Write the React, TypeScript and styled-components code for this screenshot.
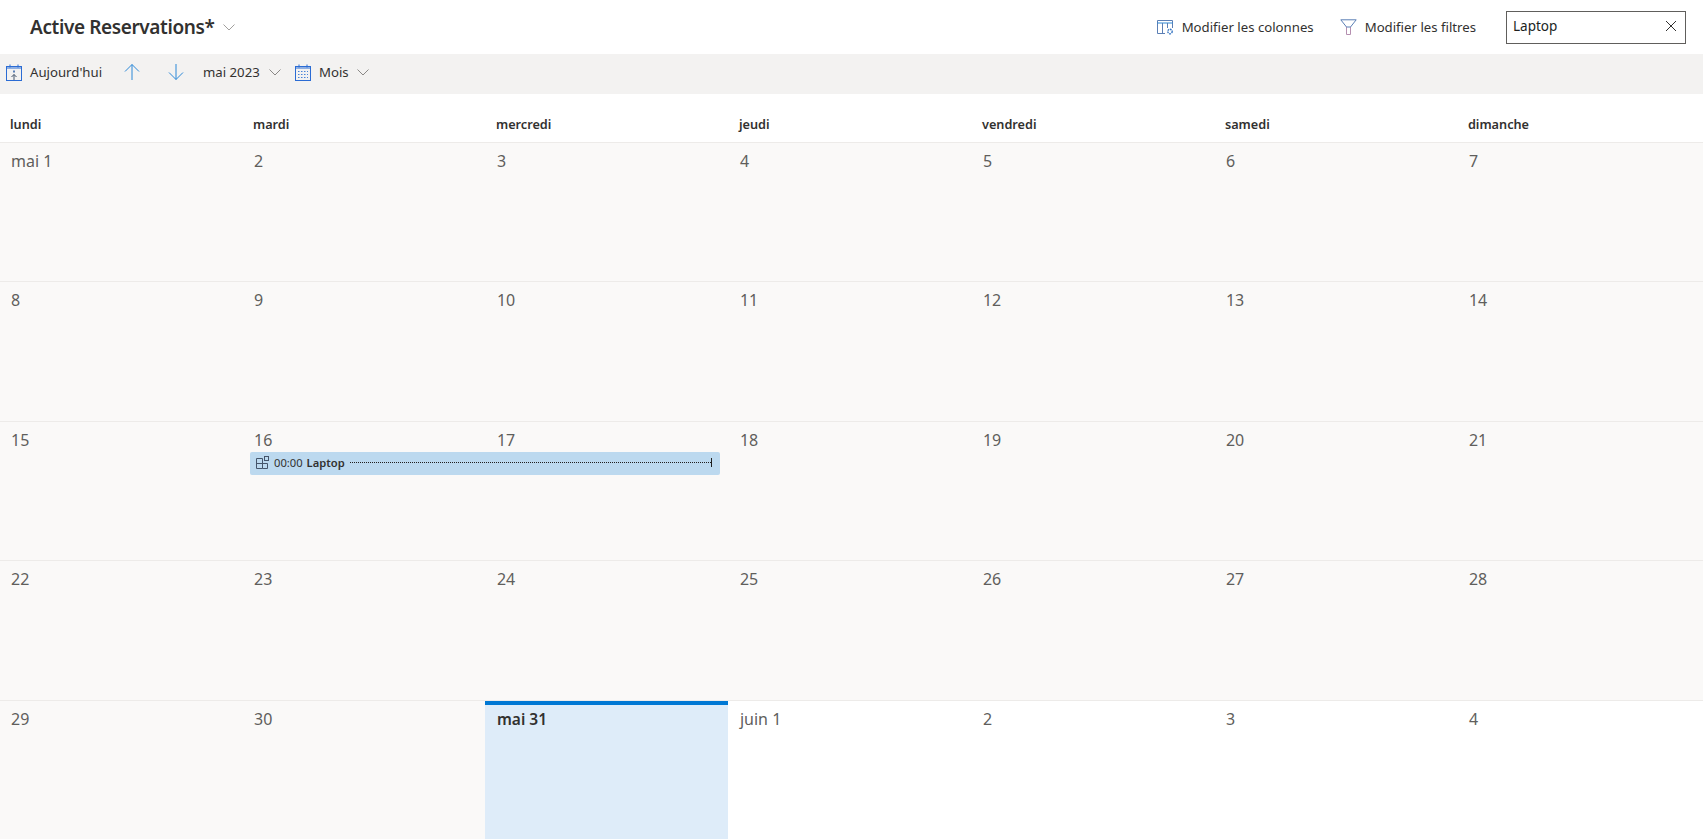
import styled, { createGlobalStyle } from "styled-components";

const GlobalStyle = createGlobalStyle`
  html, body { margin: 0; padding: 0; background: #fff; }
  body { font-family: "Noto Sans", "Open Sans", Arial, sans-serif; color: #323130; }
`;

const columns = "repeat(6, calc((100% - 2px) / 7)) 1fr";

const Page = styled.div`
  height: 840px;
  display: flex;
  flex-direction: column;
  overflow: hidden;
`;
const Header = styled.div`
  height: 54px;
  display: flex;
  align-items: center;
  justify-content: space-between;
  padding: 0 17px 0 30px;
`;
const TitleWrap = styled.div`
  display: flex;
  align-items: center;
  gap: 7px;
`;
const Title = styled.h1`
  margin: 0;
  font-size: 19px;
  letter-spacing: -0.38px;
  font-weight: 600;
  color: #323130;
`;
const HeaderActions = styled.div`
  display: flex;
  align-items: center;
`;
const ActionButton = styled.div<{ $gap: number; $mr: number }>`
  display: flex;
  align-items: center;
  gap: ${(p) => p.$gap}px;
  margin-right: ${(p) => p.$mr}px;
  font-size: 13.2px;
  color: #323130;
`;
const SearchBox = styled.div`
  width: 180px;
  height: 33px;
  box-sizing: border-box;
  border: 1px solid #605e5c;
  display: flex;
  align-items: center;
  justify-content: space-between;
  padding: 0 8px 2px 6px;
  font-size: 13.5px;
  color: #201f1e;
`;
const Toolbar = styled.div`
  height: 40px;
  box-sizing: border-box;
  padding: 0 0 4px 6px;
  background: #f3f2f1;
  display: flex;
  align-items: center;
  font-size: 13.2px;
  color: #323130;
`;
const ToolItem = styled.div<{ $w: number; $gap?: number }>`
  width: ${(p) => p.$w}px;
  display: flex;
  align-items: center;
  gap: ${(p) => p.$gap ?? 0}px;
  flex: none;
`;
const ViewLabel = styled.span`
  margin-left: 1px;
`;
const Weekdays = styled.div`
  height: 48px;
  display: grid;
  grid-template-columns: ${columns};
  align-items: center;
  padding: 12px 0 0 0;
  box-sizing: border-box;
`;
const Weekday = styled.div`
  padding-left: 10px;
  font-size: 12.7px;
  font-weight: 600;
  color: #323130;
`;
const Month = styled.div`
  flex: 1;
  display: grid;
  grid-template-rows: repeat(5, 1fr);
  margin-bottom: 1px;
`;
const Week = styled.div`
  display: grid;
  grid-template-columns: ${columns};
  grid-template-rows: 1fr;
  min-height: 0;
  border-top: 1px solid #edebe9;
`;
const Cell = styled.div<{ $col: number; $kind: "past" | "today" | "future" }>`
  grid-row: 1;
  grid-column: ${(p) => p.$col};
  box-sizing: border-box;
  padding: 6px 11px;
  font-size: ${(p) => (p.$kind === "today" ? 15.5 : 16)}px;
  line-height: 24px;
  color: ${(p) => (p.$kind === "today" ? "#323130" : "#605e5c")};
  font-weight: ${(p) => (p.$kind === "today" ? 600 : 400)};
  background: ${(p) =>
    p.$kind === "today" ? "#deecf9" : p.$kind === "past" ? "#faf9f8" : "#fff"};
  ${(p) =>
    p.$kind === "today" &&
    `box-shadow: inset 0 4px 0 #0078d4; margin: 0 1px 0 -1px; padding-left: 12px;`}
`;
const EventBar = styled.div`
  grid-row: 1;
  grid-column: 2 / span 2;
  align-self: start;
  z-index: 1;
  margin: 30px 9px 0 7px;
  height: 23px;
  border-radius: 2px;
  background: #bcd9ef;
  display: flex;
  align-items: center;
  padding: 0 8px 2px 6px;
  box-sizing: border-box;
  font-size: 11.2px;
  color: #323130;
`;
const EventTime = styled.span`
  margin-left: 5px;
`;
const EventName = styled.span`
  margin-left: 4px;
  font-weight: 600;
`;
const Duration = styled.div`
  flex: 1;
  margin-left: 5px;
  height: 9px;
  display: flex;
  align-items: center;
  border-right: 1px solid #201f1e;
  &::before {
    content: "";
    flex: 1;
    border-top: 1px dotted #201f1e;
  }
`;

const Chevron = ({ c = "#8a8886" }: { c?: string }) => (
  <svg width="14" height="14" viewBox="0 0 14 14" fill="none">
    <path d="M1.5 4.5 7 10l5.5-5.5" stroke={c} strokeWidth="1" />
  </svg>
);
const Arrow = ({ down }: { down?: boolean }) => (
  <svg width="18" height="18" viewBox="0 0 18 18" fill="none">
    <path
      d={down ? "M9 1v15.5M2 9.5l7 7 7-7" : "M9 17V1.5M2 8.5l7-7 7 7"}
      stroke="#2b88d8"
      strokeWidth="1"
    />
  </svg>
);
const TodayIcon = () => (
  <svg width="16" height="17" viewBox="0 0 16 17" fill="none">
    <rect x=".5" y="2.5" width="15" height="14" stroke="#2b6cd4" />
    <path d="M.5 4h15M4 .5v3M12 .5v3" stroke="#2b6cd4" />
    <rect x="7" y="6.5" width="2" height="2" fill="#5b7fb5" />
    <path d="M8 16V10.5M5.5 13 8 10.5l2.5 2.5" stroke="#44546a" />
  </svg>
);
const MonthIcon = () => (
  <svg width="16" height="17" viewBox="0 0 16 17" fill="none">
    <rect x=".5" y="2.5" width="15" height="14" stroke="#2b6cd4" />
    <path d="M.5 4h15M4 .5v3M12 .5v3" stroke="#2b6cd4" />
    <path
      d="M3 7.5h10M3 10.5h10M3 13.5h10"
      stroke="#4a84d8"
      strokeDasharray="1.5 1.5"
    />
  </svg>
);
const ColumnsIcon = () => (
  <svg width="17" height="16" viewBox="0 0 17 16" fill="none">
    <path d="M8 14.5H.5v-13h15V9" stroke="#5b7fb5" />
    <path d="M.5 4h15" stroke="#2b88d8" />
    <path d="M5.5 4v10M10.5 4v5" stroke="#5b7fb5" />
    <circle cx="13" cy="12.5" r="2.2" stroke="#3a78c4" strokeWidth="1.4" strokeDasharray="1.6 .7" />
  </svg>
);
const FilterIcon = () => (
  <svg width="17" height="16" viewBox="0 0 17 16" fill="none">
    <path d="M6.5 8v7.5h4V8" stroke="#b58fb0" />
    <path d="M.8.8h15.4L10.5 8h-4z" stroke="#5b7fb5" />
  </svg>
);
const CloseIcon = () => (
  <svg width="12" height="12" viewBox="0 0 12 12" fill="none">
    <path d="M1 1l10 10M11 1 1 11" stroke="#323130" strokeWidth="1" />
  </svg>
);
const EventIcon = () => (
  <svg width="13" height="13" viewBox="0 0 13 13" fill="none">
    <path d="M.5 2.5h6v10h-6zM.5 7.5h11v5h-5" stroke="#44546a" />
    <rect x="8.5" y=".5" width="4" height="4" stroke="#44546a" />
  </svg>
);

const dayNames = ["lundi", "mardi", "mercredi", "jeudi", "vendredi", "samedi", "dimanche"];
const weeks: string[][] = [
  ["mai 1", "2", "3", "4", "5", "6", "7"],
  ["8", "9", "10", "11", "12", "13", "14"],
  ["15", "16", "17", "18", "19", "20", "21"],
  ["22", "23", "24", "25", "26", "27", "28"],
  ["29", "30", "mai 31", "juin 1", "2", "3", "4"],
];

const App = () => {
  return (
    <Page>
      <GlobalStyle />
      <Header>
        <TitleWrap>
          <Title>Active Reservations*</Title>
          <Chevron c="#a19f9d" />
        </TitleWrap>
        <HeaderActions>
          <ActionButton $gap={8} $mr={26}>
            <ColumnsIcon />
            Modifier les colonnes
          </ActionButton>
          <ActionButton $gap={8} $mr={30}>
            <FilterIcon />
            Modifier les filtres
          </ActionButton>
          <SearchBox>
            Laptop
            <CloseIcon />
          </SearchBox>
        </HeaderActions>
      </Header>
      <Toolbar>
        <ToolItem $w={117} $gap={8}>
          <TodayIcon />
          Aujourd'hui
        </ToolItem>
        <ToolItem $w={44}>
          <Arrow />
        </ToolItem>
        <ToolItem $w={36}>
          <Arrow down />
        </ToolItem>
        <ToolItem $w={92} $gap={8}>
          mai 2023
          <Chevron />
        </ToolItem>
        <ToolItem $w={90} $gap={7}>
          <MonthIcon />
          <ViewLabel>Mois</ViewLabel>
          <Chevron />
        </ToolItem>
      </Toolbar>
      <Weekdays>
        {dayNames.map((d) => (
          <Weekday key={d}>{d}</Weekday>
        ))}
      </Weekdays>
      <Month>
        {weeks.map((w, i) => (
          <Week key={i}>
            {w.map((d, j) => {
              const col = i * 7 + j;
              const kind = col === 30 ? "today" : col > 30 ? "future" : "past";
              return (
                <Cell key={j} $col={j + 1} $kind={kind}>
                  {d}
                </Cell>
              );
            })}
            {i === 2 && (
              <EventBar>
                <EventIcon />
                <EventTime>00:00</EventTime>
                <EventName>Laptop</EventName>
                <Duration />
              </EventBar>
            )}
          </Week>
        ))}
      </Month>
    </Page>
  );
};
export default App;
